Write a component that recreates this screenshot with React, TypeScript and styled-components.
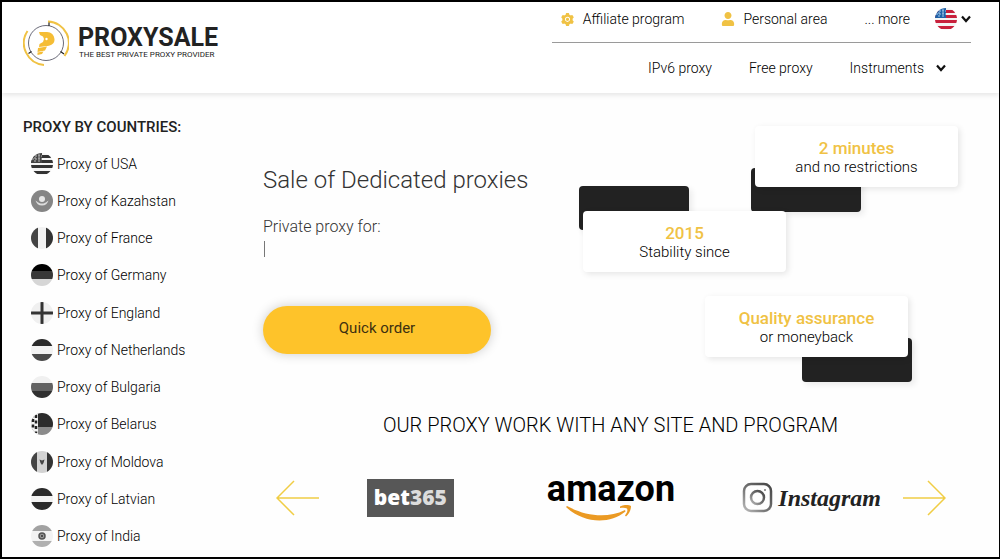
import React from "react";
import styled, { createGlobalStyle } from "styled-components";
import { AiFillSetting } from "react-icons/ai";
import { FaUser } from "react-icons/fa";

const GlobalStyle = createGlobalStyle`
  *, *::before, *::after { box-sizing: border-box; }
  body {
    margin: 0;
    background: #fefefe;
    color: #000;
    font-family: Roboto, "Liberation Sans", sans-serif;
    font-size: 14px;
    line-height: 20px;
    font-weight: 300;
  }
  h1, h2, p, ul { margin: 0; padding: 0; }
  ul { list-style: none; }
  a { color: inherit; text-decoration: none; }
  button { font-family: inherit; font-weight: inherit; color: inherit; border: 0; background: none; padding: 0; cursor: pointer; }
  svg { display: block; flex: none; }
`;

const Page = styled.div`
  display: flex;
  flex-direction: column;
  min-height: 100vh;
  border: 2px solid #000;
  border-right-width: 1px;
`;

const Header = styled.header`
  display: flex;
  justify-content: space-between;
  height: 91px;
  padding: 0 28px 0 21px;
  background: #fff;
  box-shadow: 0 2px 5px rgba(0, 0, 0, 0.1);
`;

const Brand = styled.a`
  display: flex;
  align-items: center;
  gap: 9px;
  height: 82px;
  color: #222;
`;

const BrandName = styled.span`
  display: block;
  font-size: 25px;
  line-height: 24px;
  font-weight: 700;
`;

const Tagline = styled.span`
  display: block;
  padding-left: 1px;
  font-size: 8px;
  line-height: 10px;
  font-weight: 400;
  white-space: nowrap;
`;

const Navigation = styled.nav`
  width: 419px;
`;

const NavRow = styled.div<{ $main?: boolean }>`
  display: flex;
  align-items: center;
  justify-content: flex-end;
  gap: 37px;
  height: ${(p) => (p.$main ? "50px" : "41px")};
  padding: ${(p) => (p.$main ? "0 25px 0 0" : "0 0 6px")};
  border-bottom: ${(p) => (p.$main ? "0" : "1px solid #9a9a9a")};
`;

const NavLink = styled.a`
  display: flex;
  align-items: center;
  gap: 8px;
  white-space: nowrap;
  svg { color: #f0c244; }
`;

const MenuButton = styled.button<{ $gap: number; $pull?: boolean }>`
  display: flex;
  align-items: center;
  gap: ${(p) => p.$gap}px;
  margin-left: ${(p) => (p.$pull ? "-12px" : "0")};
  font-size: 14px;
  line-height: 20px;
`;

const Body = styled.div`
  display: flex;
  flex: 1;
`;

const Sidebar = styled.aside`
  display: flex;
  flex-direction: column;
  width: 240px;
  padding: 24px 0 2px 21px;
`;

const SidebarTitle = styled.h2`
  font-size: 15px;
  line-height: 20px;
  font-weight: 500;
  color: #222;
  margin-bottom: 8px;
`;

const CountryList = styled.ul`
  display: flex;
  flex-direction: column;
  flex: 1;
  padding-left: 8px;
`;

const Country = styled.li`
  display: flex;
  align-items: center;
  flex: 1;
  min-height: 37px;
  a { display: flex; align-items: center; gap: 4px; }
`;

const Main = styled.main`
  flex: 1;
  padding: 33px 41px 0 21px;
`;

const Hero = styled.section`
  display: flex;
  justify-content: space-between;
`;

const Pitch = styled.div`
  padding-top: 38px;
`;

const Title = styled.h1`
  font-size: 24px;
  line-height: 32px;
  font-weight: 300;
  color: #333;
`;

const Lead = styled.p`
  margin-top: 21px;
  font-size: 16px;
  line-height: 20px;
  color: #333;
`;

const Caret = styled.span`
  display: block;
  width: 1px;
  height: 16px;
  margin: 4px 0 0 1px;
  background: #777;
`;

const OrderButton = styled.button`
  display: block;
  width: 228px;
  height: 48px;
  margin-top: 49px;
  padding-bottom: 4px;
  border-radius: 24px;
  background: #fec32a;
  box-shadow: 0 0 12px rgba(0, 0, 0, 0.2);
  font-size: 15px;
  font-weight: 400;
  color: #3d3010;
`;

const Features = styled.ul`
  display: flex;
  flex-direction: column;
  gap: 24px;
  width: 375px;
`;

type Corner = "topLeft" | "bottomLeft" | "bottomRight";

const accent: Record<Corner, string> = {
  topLeft: "left: -4px; top: -25px;",
  bottomLeft: "left: -4px; bottom: -25px;",
  bottomRight: "right: -4px; bottom: -25px;",
};

const Feature = styled.li<{ $corner: Corner; $indent: number }>`
  position: relative;
  width: 203px;
  margin-left: ${(p) => p.$indent}px;

  &::before {
    content: "";
    position: absolute;
    ${(p) => accent[p.$corner]}
    width: 110px;
    height: 44px;
    border-radius: 4px;
    background: #222;
    box-shadow: 3px 3px 6px rgba(0, 0, 0, 0.08);
  }
`;

const FeatureCard = styled.div`
  position: relative;
  padding: 12px 0 11px;
  border-radius: 4px;
  background: #fff;
  box-shadow: 2px 2px 6px rgba(0, 0, 0, 0.1);
  text-align: center;
  font-size: 15px;
  line-height: 18px;

  strong {
    display: block;
    color: #f0c244;
    font-size: 17px;
    line-height: 20px;
    font-weight: 500;
  }
`;

const SectionTitle = styled.h2`
  margin-top: 56px;
  text-align: center;
  font-size: 20px;
  line-height: 24px;
  font-weight: 300;
`;

const Carousel = styled.section`
  display: flex;
  align-items: center;
  justify-content: space-between;
  margin-top: 36px;
  padding: 0 12px 0 13px;
`;

const Logos = styled.ul`
  display: grid;
  grid-template-columns: repeat(3, 1fr);
  align-items: center;
  flex: 1;
  margin: 0 -9px;
`;

const LogoItem = styled.li`
  display: flex;
  justify-content: center;
`;

const Bet = styled.span`
  display: block;
  width: 87px;
  height: 38px;
  background: #575757;
  color: #fff;
  text-align: center;
  font: 800 21px/36px "Open Sans", sans-serif;
  span { color: #dcdcdc; }
`;

const Amazon = styled.span`
  display: flex;
  flex-direction: column;
  align-items: center;
  height: 49px;
  color: #000;
  font-size: 36px;
  line-height: 32px;
  font-weight: 700;
`;

const Instagram = styled.span`
  display: flex;
  align-items: center;
  gap: 5px;
  color: #222;
  font: italic 700 24px/32px "Liberation Serif", serif;
`;

const Stripes = ({ usa }: { usa?: boolean }) => (
  <>
    <rect width="22" height="22" fill="#f4f4f4" />
    {[2, 7, 12, 18].map((y) => (
      <rect key={y} y={y} width="22" height="3" fill={usa ? "#c8203c" : "#333"} />
    ))}
    <rect width="11" height="10" fill={usa ? "#1f62a8" : "#444"} />
    <path
      d="M1 3H11M1 6H11M4 1V10M8 1V10"
      stroke={usa ? "#a9c9e8" : "#bbb"}
      strokeWidth="1"
      strokeDasharray="2 1"
    />
  </>
);

const Flag = ({ id, children }: { id: string; children: React.ReactNode }) => (
  <svg width="22" height="22" viewBox="0 0 22 22" aria-hidden="true">
    <clipPath id={id}><circle cx="11" cy="11" r="11" /></clipPath>
    <g clipPath={`url(#${id})`}>{children}</g>
  </svg>
);

const Bands = ({ colors, sizes, vertical }: { colors: string[]; sizes: number[]; vertical?: boolean }) => (
  <>
    {colors.map((fill, i) => {
      const start = sizes.slice(0, i).reduce((a, b) => a + b, 0);
      return vertical
        ? <rect key={i} x={start} width={sizes[i]} height="22" fill={fill} />
        : <rect key={i} y={start} width="22" height={sizes[i]} fill={fill} />;
    })}
  </>
);

const countries: { name: string; flag: React.ReactNode }[] = [
  { name: "USA", flag: <Stripes /> },
  {
    name: "Kazahstan",
    flag: (
      <>
        <rect width="22" height="22" fill="#858585" />
        <circle cx="11" cy="9" r="3" fill="#e6e6e6" />
        <path d="M4.500 10.500c2 1 3 3 6.500 3s4.500-2 6.500-3c-1 3-3 5-6.500 5s-5.500-2-6.500-5z" fill="#ddd" />
      </>
    ),
  },
  { name: "France", flag: <Bands vertical colors={["#444", "#f2f2f2", "#333"]} sizes={[7, 8, 7]} /> },
  { name: "Germany", flag: <Bands colors={["#000", "#383838", "#d6d6d6"]} sizes={[7, 8, 7]} /> },
  {
    name: "England",
    flag: (
      <>
        <rect width="22" height="22" fill="#f0f0f0" />
        <path d="M11 0V22M0 11H22" stroke="#333" strokeWidth="3" />
      </>
    ),
  },
  { name: "Netherlands", flag: <Bands colors={["#2a2a2a", "#f2f2f2", "#4a4a4a"]} sizes={[7, 8, 7]} /> },
  { name: "Bulgaria", flag: <Bands colors={["#f0f0f0", "#626262", "#303030"]} sizes={[7, 8, 7]} /> },
  {
    name: "Belarus",
    flag: (
      <>
        <Bands colors={["#2c2c2c", "#8b8b8b"]} sizes={[14, 8]} />
        <rect width="7" height="22" fill="#f2f2f2" />
        <path d="M5 2v18M2 6v10" stroke="#222" strokeWidth="2.500" strokeDasharray="3 2.500" />
      </>
    ),
  },
  {
    name: "Moldova",
    flag: (
      <>
        <Bands vertical colors={["#444", "#d2d2d2", "#333"]} sizes={[6, 10, 6]} />
        <path d="M8.500 8.500l2.500 1L13.500 8.500l-1 3.500-1.500 2-1.500-2z" fill="#444" />
      </>
    ),
  },
  { name: "Latvian", flag: <Bands colors={["#2a2a2a", "#f2f2f2", "#2a2a2a"]} sizes={[8, 6, 8]} /> },
  {
    name: "India",
    flag: (
      <>
        <Bands colors={["#a2a2a2", "#f2f2f2", "#b0b0b0"]} sizes={[6, 10, 6]} />
        <circle cx="11" cy="11" r="3" fill="#999" stroke="#555" strokeWidth="1.500" />
        <circle cx="11" cy="11" r="1" fill="#333" />
      </>
    ),
  },
];

const features: { value: string; text: string; corner: Corner; indent: number }[] = [
  { value: "2 minutes", text: "and no restrictions", corner: "bottomLeft", indent: 172 },
  { value: "2015", text: "Stability since", corner: "topLeft", indent: 0 },
  { value: "Quality assurance", text: "or moneyback", corner: "bottomRight", indent: 122 },
];

const Chevron = () => (
  <svg width="10" height="8" viewBox="0 0 10 8" aria-hidden="true">
    <path d="M1 1.500L5 6L9 1.500" fill="none" stroke="#111" strokeWidth="2.200" />
  </svg>
);

const Emblem = () => (
  <svg width="46" height="46" viewBox="0 0 46 46" aria-hidden="true">
    <circle cx="23" cy="23" r="17.500" fill="none" stroke="#445" strokeWidth="0.800" />
    <g fill="none" stroke="#f0c244" strokeWidth="2">
      <path d="M25 1.500A21.500 21.500 0 0 1 41.500 36" />
      <path d="M4.500 11A22 22 0 0 0 21 45" />
    </g>
    <path d="M26 2.500V6M5.500 33.500l3-2M37.500 31.500l3.500 2.500" stroke="#222" strokeWidth="1.200" />
    <path d="M16 12h8c4 0 7.500 3 7.500 7.500 0 4-3 6-7 6.500l-8.500 1 .5-3 3.500-2 1-3-1-2.500-3-1.500z" fill="#f5bd35" />
    <path d="M15 28l9-1.500-2 4-7.500 1.500zM14.500 32.500l6-1-1.500 2.500-4.500 1z" fill="#f5bd35" />
    <circle cx="23.500" cy="19" r="1.200" fill="#fff" />
  </svg>
);

const Arrow = ({ back }: { back?: boolean }) => (
  <svg width="43" height="36" viewBox="0 0 43 36" aria-hidden="true">
    <path
      d={back ? "M43 18H1M18 1L1 18L18 35" : "M0 18H42M25 1L42 18L25 35"}
      fill="none"
      stroke="#f0cd45"
      strokeWidth="1.500"
    />
  </svg>
);

export default function App() {
  return (
    <>
      <GlobalStyle />
      <Page>
        <Header>
          <Brand href="#">
            <Emblem />
            <span>
              <BrandName>PROXYSALE</BrandName>
              <Tagline>THE BEST PRIVATE PROXY PROVIDER</Tagline>
            </span>
          </Brand>
          <Navigation>
            <NavRow>
              <NavLink href="#"><AiFillSetting size={15} />Affiliate program</NavLink>
              <NavLink href="#"><FaUser size={14} />Personal area</NavLink>
              <NavLink href="#">... more</NavLink>
              <MenuButton $gap={4} $pull aria-label="Language">
                <Flag id="lang"><Stripes usa /></Flag>
                <Chevron />
              </MenuButton>
            </NavRow>
            <NavRow $main>
              <NavLink href="#">IPv6 proxy</NavLink>
              <NavLink href="#">Free proxy</NavLink>
              <MenuButton $gap={12}>Instruments<Chevron /></MenuButton>
            </NavRow>
          </Navigation>
        </Header>
        <Body>
          <Sidebar>
            <SidebarTitle>PROXY BY COUNTRIES:</SidebarTitle>
            <CountryList>
              {countries.map((c) => (
                <Country key={c.name}>
                  <a href="#">
                    <Flag id={`flag-${c.name}`}>{c.flag}</Flag>
                    Proxy of {c.name}
                  </a>
                </Country>
              ))}
            </CountryList>
          </Sidebar>
          <Main>
            <Hero>
              <Pitch>
                <Title>Sale of Dedicated proxies</Title>
                <Lead>Private proxy for:</Lead>
                <Caret />
                <OrderButton>Quick order</OrderButton>
              </Pitch>
              <Features>
                {features.map((f) => (
                  <Feature key={f.value} $corner={f.corner} $indent={f.indent}>
                    <FeatureCard>
                      <strong>{f.value}</strong>
                      {f.text}
                    </FeatureCard>
                  </Feature>
                ))}
              </Features>
            </Hero>
            <SectionTitle>OUR PROXY WORK WITH ANY SITE AND PROGRAM</SectionTitle>
            <Carousel>
              <button aria-label="Previous"><Arrow back /></button>
              <Logos>
                <LogoItem><Bet>bet<span>365</span></Bet></LogoItem>
                <LogoItem>
                  <Amazon>
                    amazon
                    <svg width="124" height="17" viewBox="0 0 124 17" aria-hidden="true">
                      <path d="M18 1C36 11 58 14 76 5l.5 1.500C60 20 34 18 17 2z" fill="#eb9a23" />
                      <path d="M71 1.500c4-2 8-2 11-.5 0 4-2 8-5 10.500l-1-1c2-3 3-5 2-7-2-1-4-1-7-.5z" fill="#eb9a23" />
                    </svg>
                  </Amazon>
                </LogoItem>
                <LogoItem>
                  <Instagram>
                    <svg width="31" height="31" viewBox="0 0 31 31" aria-hidden="true">
                      <defs>
                        <linearGradient id="ig" x1="1" y1="0" x2="0" y2="1">
                          <stop offset="0" stopColor="#444" />
                          <stop offset="0.600" stopColor="#777" />
                          <stop offset="1" stopColor="#bbb" />
                        </linearGradient>
                      </defs>
                      <g fill="none" stroke="url(#ig)" strokeWidth="2.500">
                        <rect x="2" y="2" width="27" height="27" rx="7" />
                        <circle cx="15.500" cy="15.500" r="6.500" />
                      </g>
                      <circle cx="23" cy="8" r="1" fill="#777" />
                    </svg>
                    Instagram
                  </Instagram>
                </LogoItem>
              </Logos>
              <button aria-label="Next"><Arrow /></button>
            </Carousel>
          </Main>
        </Body>
      </Page>
    </>
  );
}
